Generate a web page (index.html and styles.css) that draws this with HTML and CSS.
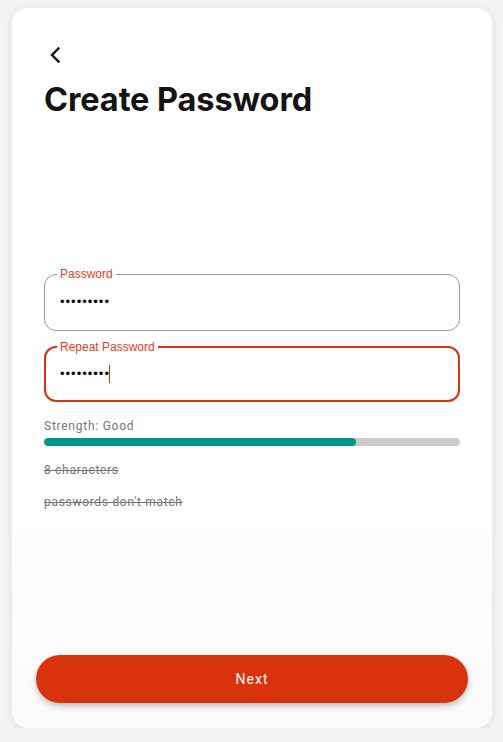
FILE: index.html
```html
<!DOCTYPE html>
<html>
<head>
<meta charset="utf-8">
<link rel="stylesheet" href="styles.css">
</head>
<body>
<div class="card">
  <button class="back" aria-label="Back">
    <svg width="16" height="18" viewBox="0 0 16 18"><path d="M9.5 2.5 L3 9 L9.5 15.5" fill="none" stroke="#111" stroke-width="2.4" stroke-linecap="square"/></svg>
  </button>
  <h1 class="title">Create Password</h1>

  <fieldset class="field field-first">
    <legend class="field-label">Password</legend>
    <div class="value"><span class="dots">•••••••••</span></div>
  </fieldset>

  <fieldset class="field field-active">
    <legend class="field-label">Repeat Password</legend>
    <div class="value"><span class="dots">•••••••••</span><span class="caret"></span></div>
  </fieldset>

  <div class="strength">Strength: Good</div>
  <div class="bar"><div class="bar-fill" style="width:75%"></div></div>

  <div class="rule rule-first">8 characters</div>
  <div class="rule">passwords don't match</div>

  <button class="next">Next</button>
</div>
</body>
</html>
```
FILE: styles.css
```css
html, body {
  margin: 0;
  padding: 0;
  background: #f3f3f3;
}
body {
  padding: 8px 11px 0 12px;
  font-family: Roboto, "Liberation Sans", sans-serif;
}
.card {
  box-sizing: border-box;
  width: 480px;
  height: 720px;
  background: linear-gradient(#ffffff, #ffffff 70%, #fafafa);
  border-radius: 16px;
  box-shadow: 0 2px 12px rgba(0,0,0,0.08);
  padding: 38px 32px 25px 32px;
  display: flex;
  flex-direction: column;
}
.back {
  border: 0;
  background: none;
  padding: 0;
  margin: 0 0 0 5px;
  width: 16px;
  height: 18px;
  display: block;
  cursor: pointer;
}
.title {
  font-family: Inter, "Liberation Sans", sans-serif;
  font-weight: 700;
  font-size: 32.5px;
  line-height: 40px;
  margin: 16px 0 0 0;
  color: #141414;
  letter-spacing: -0.1px;
}
.field {
  margin: 0;
  padding: 0 15px;
  height: 64px;
  box-sizing: border-box;
  border: 1px solid #9a9a9a;
  border-radius: 12px;
  display: block;
  min-width: 0;
  flex-shrink: 0;
}
.field-first {
  margin-top: 147px;
}
.field-active {
  margin-top: 9px;
  border: 2px solid #d9330f;
  padding: 0 14px;
  height: 62px;
}
.field-label {
  font-family: "Liberation Sans", Arial, sans-serif;
  font-size: 12px;
  color: #e2401e;
  padding: 0 3px;
  margin-left: -3px;
  line-height: 14px;
}
.value {
  padding-top: 12px;
  height: 17px;
  display: flex;
  align-items: center;
}
.field-active .value {
  padding-top: 11px;
}
.dots {
  font-family: "Liberation Sans", Arial, sans-serif;
  font-size: 13px;
  letter-spacing: 1px;
  line-height: 16px;
  color: #000;
}
.caret {
  display: inline-block;
  width: 1px;
  height: 18px;
  background: #d9330f;
  margin-left: -1px;
}
.strength {
  font-size: 12px;
  color: #777;
  margin-top: 17px;
  line-height: 14px;
  letter-spacing: 0.75px;
}
.bar {
  height: 8px;
  border-radius: 4px;
  background: #cccccc;
  margin-top: 5px;
  overflow: hidden;
  flex-shrink: 0;
}
.bar-fill {
  height: 100%;
  background: #009688;
  border-radius: 4px;
}
.rule {
  font-size: 12px;
  color: #777;
  text-decoration: line-through;
  line-height: 14px;
  letter-spacing: 0.7px;
  margin-top: 18px;
}
.rule-first {
  margin-top: 17px;
}
.next {
  margin: auto -8px 0 -8px;
  height: 48px;
  flex-shrink: 0;
  border: 0;
  border-radius: 24px;
  background: #d9330d;
  color: #fff;
  font-family: Roboto, "Liberation Sans", sans-serif;
  font-size: 14px;
  letter-spacing: 1px;
  box-shadow: 0 3px 6px rgba(0,0,0,0.25);
  cursor: pointer;
}
```
